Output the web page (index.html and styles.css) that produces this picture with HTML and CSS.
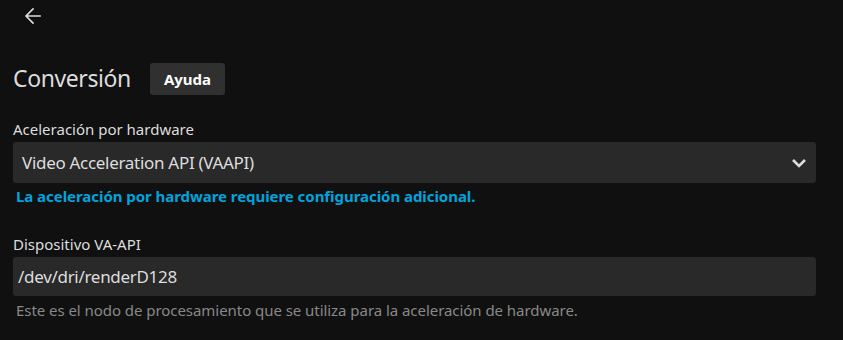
FILE: index.html
```html
<!DOCTYPE html>
<html lang="es">
<head>
    <meta charset="UTF-8">
    <meta name="viewport" content="width=device-width, initial-scale=1.0">
    <title>Conversión</title>
    <link rel="stylesheet" href="styles.css">
</head>
<body>
    <!-- Top bar -->
    <div class="header">
        <button class="back-btn" aria-label="Atrás">
            <svg width="24" height="24" viewBox="0 0 24 24"><path d="M19 12H5.5M12 5l-7 7 7 7" fill="none" stroke="#ddd" stroke-width="1.6" stroke-linecap="square"/></svg>
        </button>
    </div>

    <div class="content">
        <div class="section-title">
            <h2>Conversión</h2>
            <button class="help-btn">Ayuda</button>
        </div>

        <div class="field">
            <label class="field-label">Aceleración por hardware</label>
            <div class="select">
                <span>Video Acceleration API (VAAPI)</span>
                <svg class="chevron" width="16" height="10" viewBox="0 0 16 10"><path d="M2 2l6 6 6-6" fill="none" stroke="#ddd" stroke-width="2.6"/></svg>
            </div>
            <div class="field-note">La aceleración por hardware requiere configuración adicional.</div>
        </div>

        <div class="field">
            <label class="field-label">Dispositivo VA-API</label>
            <div class="input">/dev/dri/renderD128</div>
            <div class="field-help">Este es el nodo de procesamiento que se utiliza para la aceleración de hardware.</div>
        </div>
    </div>
</body>
</html>
```

FILE: styles.css
```css
body { margin: 0; background: #101010; color: #ddd; font-family: "Noto Sans", sans-serif; }
.header { height: 32px; padding-left: 21px; display: flex; align-items: center; }
.back-btn { background: none; border: none; padding: 0; width: 24px; height: 24px; cursor: pointer; }
.content { padding: 0 27px 0 13px; }
.section-title { display: flex; align-items: center; margin-top: 31px; height: 32px; }
.section-title h2 { margin: -2px 0 0 0; font-size: 23px; letter-spacing: -0.4px; font-weight: 400; color: #ddd; }
.help-btn { margin-left: 19px; height: 32px; padding: 0 14px; background: #303030; color: #fff; border: none; border-radius: 3px; font-family: inherit; font-size: 15px; font-weight: 700; }
.field { margin-top: 24px; }
.field + .field { margin-top: 28px; }
.field-label { display: block; font-size: 15px; margin-bottom: 3px; }
.select { height: 41px; display: flex; align-items: center; justify-content: space-between; background: #292929; border-radius: 3px; padding: 0 9px; font-size: 17px; letter-spacing: -0.3px; }
.input { height: 39px; display: flex; align-items: center; background: #292929; border-radius: 3px; padding: 0 5px; font-size: 17px; letter-spacing: -0.3px; }
.field-note { margin-top: 3px; margin-left: 3px; font-size: 15px; font-weight: 700; color: #00a4dc; letter-spacing: -0.05px; }
.field-help { margin-top: 4px; margin-left: 3px; font-size: 15px; color: #888; letter-spacing: -0.05px; }
```
